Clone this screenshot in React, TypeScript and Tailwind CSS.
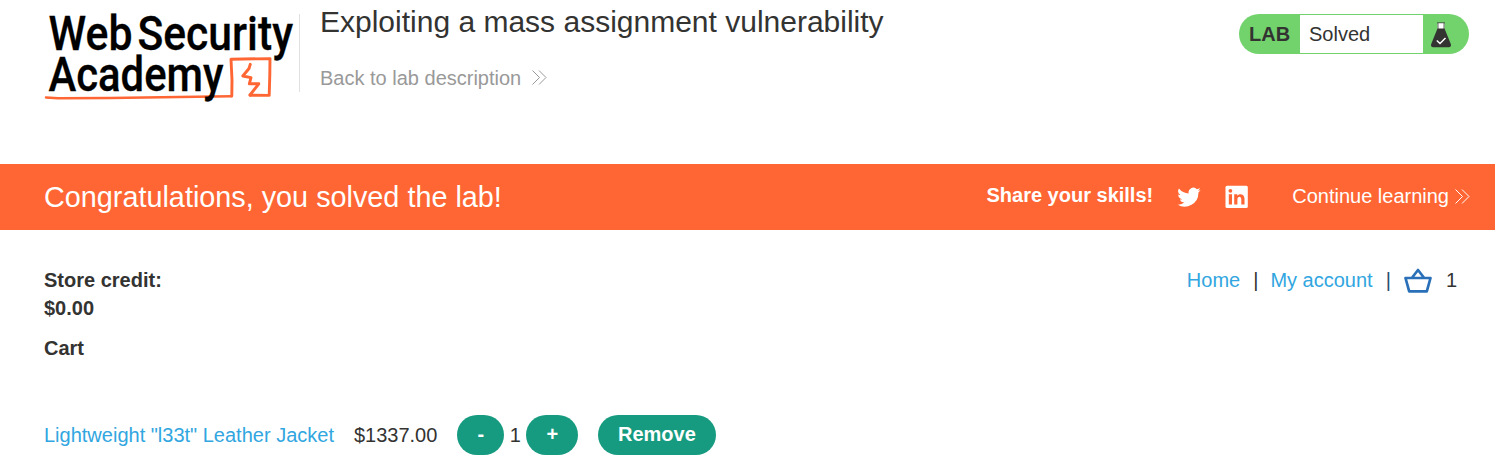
import React from "react";

function Logo() {
  return (
    <svg width="300" height="110" viewBox="0 0 300 110" className="shrink-0" role="img" aria-label="Web Security Academy">
      <g fill="#000" stroke="#000" strokeWidth="0.3" fontFamily="Roboto, sans-serif" fontWeight="500" fontSize="48.5">
        <text x="48.5" y="50" textLength="84" lengthAdjust="spacingAndGlyphs">Web</text>
        <text x="137.5" y="50" textLength="155.5" lengthAdjust="spacingAndGlyphs">Security</text>
      </g>
      <g fill="none" stroke="#ff6633" strokeLinecap="round" strokeLinejoin="round">
        <path d="M46 97.4 L58 98.2 L110 98 L231.5 96.2" strokeWidth="2.5" />
        <path d="M231.8 96 L232 80 L231 59.2 L270 58.6 L269.8 75 L269.2 95.4 L250 95.2" strokeWidth="2.9" />
        <path d="M250.3 64.3 L249 68.5 L242.8 76 L251 77.7 L249.3 83.8 L258.8 83.8 L250 95" strokeWidth="2.9" />
      </g>
      <text x="48.5" y="91" fill="#000" stroke="#000" strokeWidth="0.3" fontFamily="Roboto, sans-serif" fontWeight="500" fontSize="47.5" textLength="175" lengthAdjust="spacingAndGlyphs">Academy</text>
    </svg>
  );
}

function Chevrons({ className }: { className: string }) {
  return (
    <svg width="15" height="15" viewBox="0 0 15 15" fill="none" stroke="currentColor" strokeWidth="1" className={className}>
      <path d="M0.5 0.5 L7.5 7.5 L0.5 14.5 M7 0.5 L14 7.5 L7 14.5" />
    </svg>
  );
}

function Flask() {
  return (
    <svg width="20" height="26" viewBox="0 0 20 26" className="mt-[7px] ml-2">
      <path d="M6.5 1 H13.5 V7 H6.5z" fill="#fff" />
      <path d="M6 .8 H14 M7 1 V8 M13 1 V8" stroke="#333332" strokeOpacity=".75" fill="none" />
      <path d="M6.5 6.5 H13.5 L19.8 22 Q20.5 25.3 18 25.3 H2 Q-.5 25.3 .2 22z" fill="#333332" />
      <path d="M5.8 18.5 L9 21.5 L14.5 16" stroke="#fff" strokeWidth="1.5" fill="none" />
    </svg>
  );
}

function Header() {
  return (
    <header className="flex h-[164px] items-start">
      <Logo />
      <div className="-ml-px mt-[14px] h-[78px] w-px bg-[#e0e0e0]" />
      <div className="ml-5 flex-1 pt-[2px]">
        <h1 className="text-[30px] leading-10">Exploiting a mass assignment vulnerability</h1>
        <a className="mt-[22px] flex text-xl leading-7 text-[#999]">
          Back to lab description
          <Chevrons className="ml-[11px] mt-[6px]" />
        </a>
      </div>
      <div className="mr-[26px] mt-[14px] flex h-10 w-[230px] overflow-hidden rounded-[20px] bg-[#72d36d] py-px text-xl">
        <b className="w-[61px] pl-[10px] leading-[39px]">LAB</b>
        <span className="w-[123px] bg-white pl-[9px] leading-[38px]">Solved</span>
        <Flask />
      </div>
    </header>
  );
}

function Banner() {
  return (
    <section className="flex h-[66px] items-start bg-[#ff6633] pl-11 pr-[25px] text-xl leading-[66px] text-white">
      <h2 className="flex-1 text-[28.8px]">Congratulations, you solved the lab!</h2>
      <b className="leading-[62px]">Share your skills!</b>
      <svg width="24" height="24" viewBox="0 0 24 24" fill="currentColor" className="ml-6 mt-[21px]">
        <path d="M23.6 4.9a9.6 9.6 0 0 1-2.7.75 4.8 4.8 0 0 0 2.1-2.6 9.7 9.7 0 0 1-3.1 1.15 4.8 4.8 0 0 0-8.2 4.4A13.7 13.7 0 0 1 1.9 3.6a4.8 4.8 0 0 0 1.5 6.4 4.8 4.8 0 0 1-2.2-.6 4.8 4.8 0 0 0 3.9 4.8 4.8 4.8 0 0 1-2.2.1 4.8 4.8 0 0 0 4.5 3.3A9.8 9.8 0 0 1 .3 19.6a13.8 13.8 0 0 0 21.1-12.2c.9-.7 1.6-1.5 2.2-2.5z" />
      </svg>
      <svg width="24" height="24" viewBox="0 0 24 24" className="ml-6 mt-[21px]">
        <rect x=".5" y=".8" width="22.3" height="22.3" rx="1.5" fill="#fff" />
        <path fill="#ff6633" d="M3.8 9.3h3.2V19.6H3.8z M9.2 9.3h3.1v1.4c1.6-2.5 7.2-2.3 7.2 3V19.6h-3.2v-5c0-4-3.9-3.5-3.9 0V19.6H9.2z" />
        <circle cx="5.4" cy="5.8" r="1.9" fill="#ff6633" />
      </svg>
      <a className="ml-[43px] flex leading-[64px]">
        Continue learning
        <Chevrons className="ml-[6px] mt-[25px]" />
      </a>
    </section>
  );
}

function BasketIcon() {
  return (
    <svg width="28" height="26" viewBox="0 0 28 26" fill="none" stroke="#2a70b8" strokeWidth="2.7" strokeLinejoin="round" className="ml-[13px] mt-[2px]">
      <path d="M1.5 10 H26.5 L22.8 23.3 H5.2z M7.8 10 L14 2 L20.2 10" />
    </svg>
  );
}

function RoundButton({ children, className }: { children: React.ReactNode; className: string }) {
  return (
    <button className={`h-10 rounded-[20px] bg-[#179b80] pb-px text-center leading-[39px] font-bold text-white ${className}`}>
      {children}
    </button>
  );
}

export default function App() {
  return (
    <div className="h-[472px] overflow-hidden bg-white font-['Liberation_Sans',Arial,sans-serif] text-xl text-[#333332]">
      <Header />
      <Banner />
      <main className="pl-11 pt-9">
        <div className="flex h-[68px] justify-between leading-7">
          <div className="font-bold">
            <p>Store credit:</p>
            <p>$0.00</p>
          </div>
          <nav className="mr-[38px] flex">
            <a className="text-[#31a6e0]">Home</a>
            <span className="ml-[13px]">|</span>
            <a className="ml-3 text-[#31a6e0]">My account</a>
            <span className="ml-[13px] text-[#2a5070]">|</span>
            <BasketIcon />
            <span className="ml-[14px]">1</span>
          </nav>
        </div>
        <h3 className="font-bold leading-7">Cart</h3>
        <div className="mt-[53px] flex h-10 leading-10">
          <a className="text-[#31a6e0]">Lightweight "l33t" Leather Jacket</a>
          <span className="ml-5">$1337.00</span>
          <RoundButton className="ml-5 w-[47px]">-</RoundButton>
          <span className="w-[22px] text-center">1</span>
          <RoundButton className="w-[52px]">+</RoundButton>
          <RoundButton className="ml-5 w-[118px] pr-px">Remove</RoundButton>
        </div>
      </main>
    </div>
  );
}
